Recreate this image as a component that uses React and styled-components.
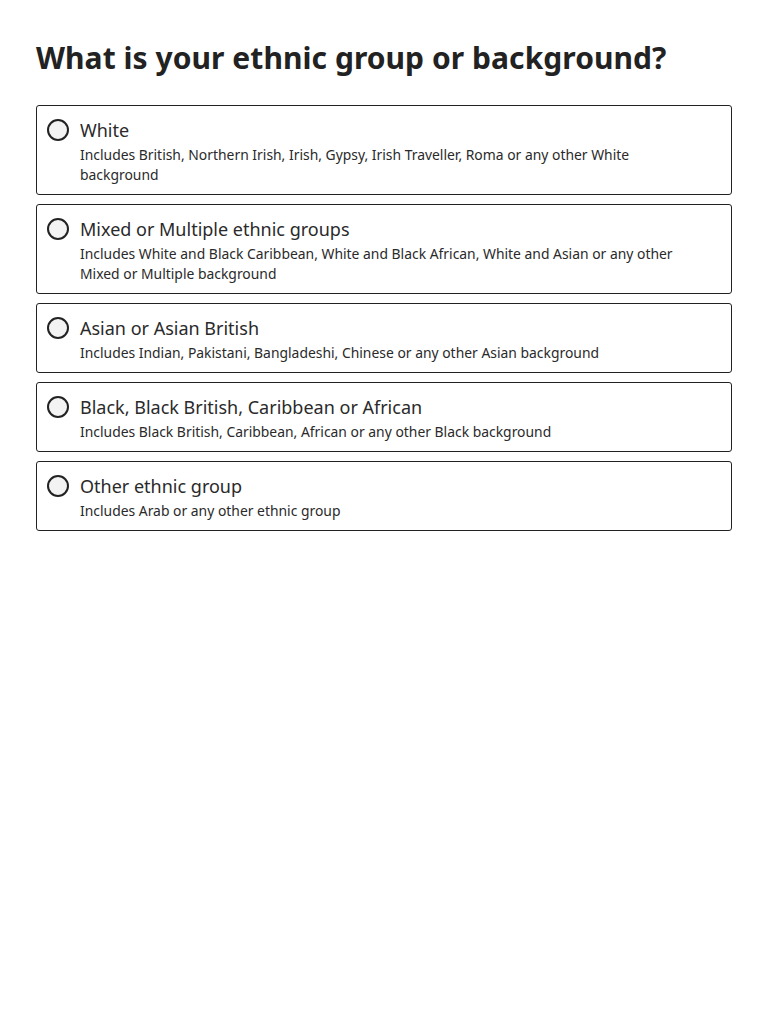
import React from "react";
import styled, { createGlobalStyle } from "styled-components";

const Global = createGlobalStyle`
  html, body { margin: 0; padding: 0; background: #fff; }
  body { font-family: "Noto Sans", "Open Sans", sans-serif; color: #222; }
`;

const Page = styled.main`
  padding: 36px 36px;
`;

const Heading = styled.h1`
  margin: 0 0 25px;
  font-size: 30px;
  line-height: 44px;
  font-weight: 700;
  letter-spacing: 0.05px;
  color: #222;
`;

const List = styled.div`
  display: flex;
  flex-direction: column;
  gap: 9px;
`;

const Card = styled.label`
  display: flex;
  align-items: flex-start;
  gap: 11px;
  border: 1px solid #222;
  border-radius: 3px;
  padding: 12px 12px 9px 10px;
  cursor: pointer;
`;

const Radio = styled.span`
  flex: none;
  width: 18px;
  height: 18px;
  margin-top: 1px;
  border: 2px solid #222;
  border-radius: 50%;
  background: #f3f3f3;
`;

const Texts = styled.div`
  display: flex;
  flex-direction: column;
  padding-right: 38px;
`;

const Label = styled.span`
  font-size: 18px;
  line-height: 24px;
  color: #2a2a2a;
`;

const Hint = styled.span`
  margin-top: 3px;
  font-size: 13.9px;
  line-height: 20px;
  color: #2a2a2a;
`;

const options = [
  ["White", "Includes British, Northern Irish, Irish, Gypsy, Irish Traveller, Roma or any other White background"],
  ["Mixed or Multiple ethnic groups", "Includes White and Black Caribbean, White and Black African, White and Asian or any other Mixed or Multiple background"],
  ["Asian or Asian British", "Includes Indian, Pakistani, Bangladeshi, Chinese or any other Asian background"],
  ["Black, Black British, Caribbean or African", "Includes Black British, Caribbean, African or any other Black background"],
  ["Other ethnic group", "Includes Arab or any other ethnic group"],
];

export default function App() {
  return (
    <>
      <Global />
      <Page>
        <Heading>What is your ethnic group or background?</Heading>
        <List>
          {options.map(([label, hint]) => (
            <Card key={label}>
              <Radio />
              <Texts>
                <Label>{label}</Label>
                <Hint>{hint}</Hint>
              </Texts>
            </Card>
          ))}
        </List>
      </Page>
    </>
  );
}
